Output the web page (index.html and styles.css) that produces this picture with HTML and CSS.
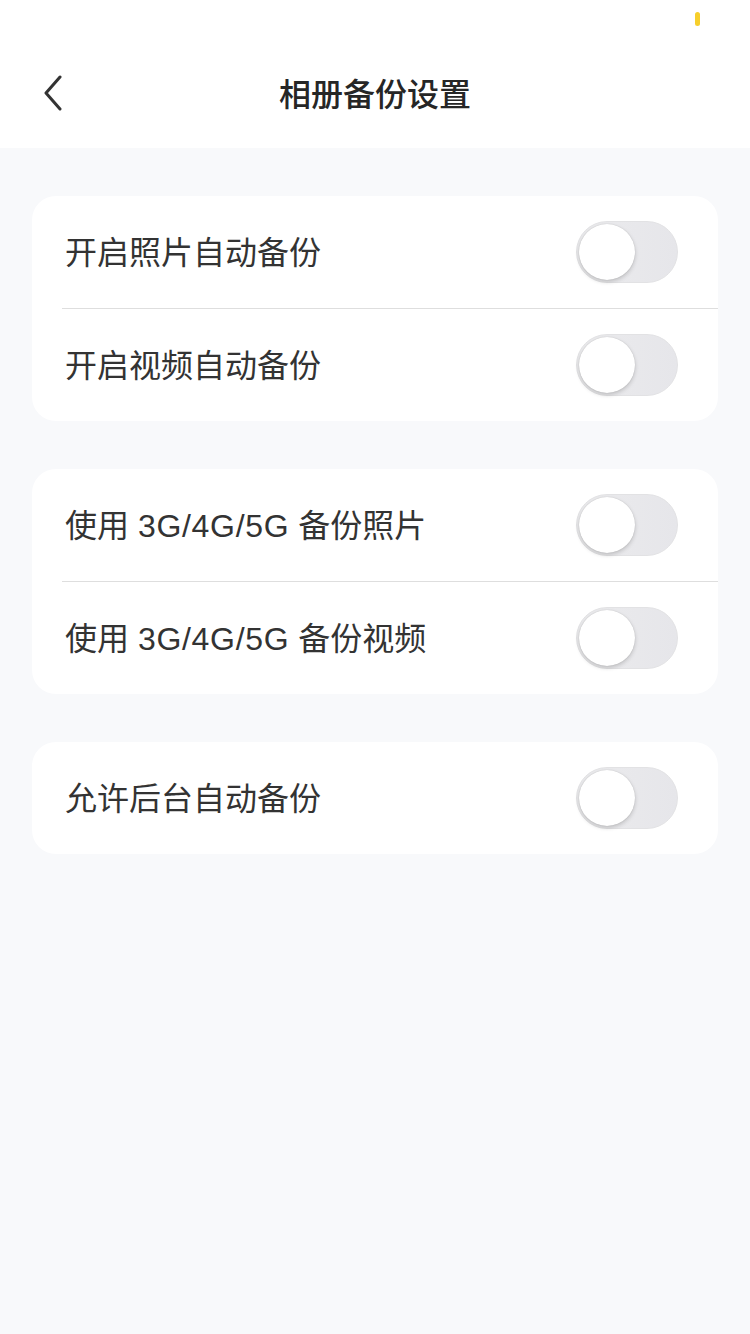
FILE: index.html
```html
<!DOCTYPE html>
<html lang="zh-CN">
<head>
<meta charset="utf-8">
<link rel="stylesheet" href="styles.css">
</head>
<body>
<div class="page">
  <header class="header">
    <div class="status"><span class="dot"></span></div>
    <div class="navbar">
      <svg class="back" width="24" height="36" viewBox="0 0 24 36"><path d="M19 2 L5 18 L19 34" fill="none" stroke="#333" stroke-width="3" stroke-linecap="round" stroke-linejoin="round"/></svg>
      <h1 class="title">相册备份设置</h1>
    </div>
  </header>
  <main class="content">
    <section class="card">
      <div class="row"><span class="label">开启照片自动备份</span><span class="switch"><span class="knob"></span></span></div>
      <div class="row"><span class="label">开启视频自动备份</span><span class="switch"><span class="knob"></span></span></div>
    </section>
    <section class="card">
      <div class="row"><span class="label">使用 <span class="latin">3G/4G/5G</span> 备份照片</span><span class="switch"><span class="knob"></span></span></div>
      <div class="row"><span class="label">使用 <span class="latin">3G/4G/5G</span> 备份视频</span><span class="switch"><span class="knob"></span></span></div>
    </section>
    <section class="card">
      <div class="row"><span class="label">允许后台自动备份</span><span class="switch"><span class="knob"></span></span></div>
    </section>
  </main>
</div>
</body>
</html>
```

FILE: styles.css
```css
* { box-sizing: border-box; margin: 0; padding: 0; }
html, body { width: 750px; height: 1334px; }
body {
  background: #f8f9fb;
  font-family: "Liberation Sans", "Noto Sans CJK SC", sans-serif;
  color: #333;
}
.page { min-height: 1334px; background: #f8f9fb; }
.header { background: #fff; height: 148px; display: flex; flex-direction: column; }
.status { height: 40px; display: flex; justify-content: flex-end; padding-right: 50px; padding-top: 12px; }
.dot { width: 5px; height: 14px; border-radius: 3px; background: #f7cf2b; }
.navbar { position: relative; height: 108px; display: flex; align-items: center; justify-content: center; }
.back { position: absolute; left: 41px; top: 35px; }
.title { font-size: 32px; font-weight: 500; color: #262626; line-height: 1; margin-top: -4px; font-family: "Noto Sans CJK SC", sans-serif; }
.content { padding: 48px 32px; display: flex; flex-direction: column; gap: 48px; }
.card { background: #fff; border-radius: 24px; overflow: hidden; }
.row {
  height: 112px; display: flex; align-items: center; justify-content: space-between;
  padding: 0 40px 0 33px; position: relative;
}
.row + .row::before {
  content: ""; position: absolute; left: 30px; right: 0; top: 0; height: 1px; background: #dedede;
}
.row + .row { height: 113px; }
.label { font-size: 32px; color: #333; line-height: 1; margin-top: 2px; }
.latin { letter-spacing: 0.7px; }
.switch {
  width: 102px; height: 62px; border-radius: 31px; background: linear-gradient(90deg, #ebebed, #e6e6ea);
  border: 1px solid #e2e2e4; position: relative; display: flex; align-items: center; padding-left: 2px;
}
.knob {
  width: 56px; height: 56px; border-radius: 50%; background: #fff;
  box-shadow: 0 2px 4px rgba(0,0,0,0.18), 0 0 1px rgba(0,0,0,0.2);
}
```
